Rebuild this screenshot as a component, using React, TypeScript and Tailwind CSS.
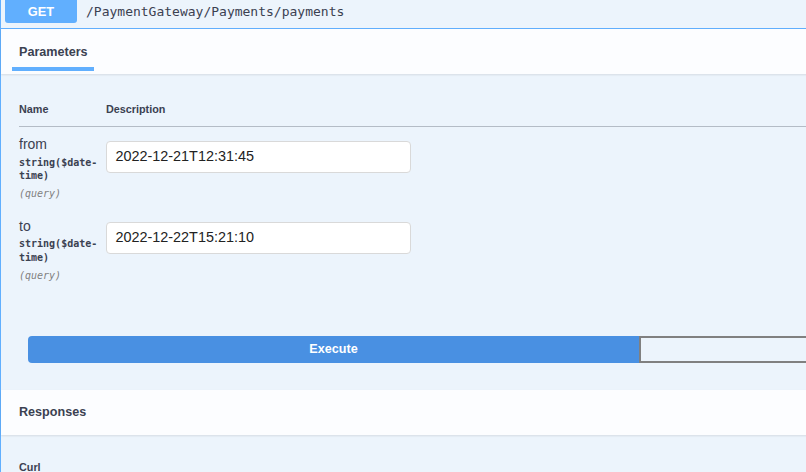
export default function App() {
  const rows = [
    { name: "from", value: "2022-12-21T12:31:45" },
    { name: "to", value: "2022-12-22T15:21:10" },
  ];
  return (
    <div
      className="w-[806px] h-[472px] overflow-hidden bg-white text-[#3b4151]"
      style={{ fontFamily: '"Liberation Sans", Arial, sans-serif' }}
    >
      <div className="w-[1300px] min-h-[472px] border-l border-[#61affe] bg-[#ecf4fc]">
        {/* summary */}
        <div className="h-[29px] border-b border-[#61affe] flex items-start pl-[4px]">
          <div className="w-[72px] h-[23px] bg-[#61affe] rounded-b-[3px] text-white font-bold text-[12.8px] flex items-center justify-center">
            GET
          </div>
          <div
            className="ml-[9px] h-[24px] flex items-center text-[13px] text-[#3b4151]"
            style={{ fontFamily: '"DejaVu Sans Mono", monospace' }}
          >
            /PaymentGateway/Payments/payments
          </div>
        </div>

        {/* parameters header */}
        <div className="h-[45px] bg-[#fcfdff] shadow-[0_1px_2px_rgba(0,0,0,0.1)] pl-[11px] relative">
          <div className="w-[82px] h-[42px] pt-[8px] pl-[7px] flex items-center border-b-4 border-[#61affe] text-[12.6px] font-bold">
            Parameters
          </div>
        </div>

        {/* table */}
        <div className="pl-[18px]">
          <div className="h-[53px] border-b border-[#b4bcc6] flex items-end pb-[10px] text-[10.8px] font-bold leading-[14px]">
            <div className="w-[87px]">Name</div>
            <div>Description</div>
          </div>
          {rows.map((r) => (
            <div key={r.name} className="h-[81.5px] flex">
              <div className="w-[87px] pt-[8.3px]">
                <div className="text-[14px] leading-[18px]">{r.name}</div>
                <div
                  className="mt-[2.5px] text-[10px] leading-[13.5px] font-bold w-[80px]"
                  style={{ fontFamily: '"DejaVu Sans Mono", monospace' }}
                >
                  string($date-
                  <br />
                  time)
                </div>
                <div
                  className="mt-[4.5px] text-[10px] leading-[13.5px] italic text-[#808080]"
                  style={{ fontFamily: '"DejaVu Sans Mono", monospace' }}
                >
                  (query)
                </div>
              </div>
              <div className="pt-[13.5px]">
                <div className="w-[305px] h-[32px] ml-[-0.5px] bg-white border border-[#d9d9d9] rounded-[4px] pl-[9px] flex items-center text-[14.4px] text-[#222]">
                  {r.value}
                </div>
              </div>
            </div>
          ))}
        </div>

        {/* execute */}
        <div className="mt-[46px] pl-[27px] flex">
          <div className="w-[611px] h-[27px] bg-[#4990e2] rounded-l-[4px] text-white font-bold text-[12.6px] flex items-center justify-center">
            Execute
          </div>
          <div className="w-[612px] h-[27px] border-2 border-[#808080] rounded-r-[4px]"></div>
        </div>

        {/* responses */}
        <div className="mt-[27px] h-[45px] bg-[#fcfdff] shadow-[0_1px_2px_rgba(0,0,0,0.1)] pl-[18px] flex items-center text-[12.6px] font-bold">
          <span className="mt-[-1px]">Responses</span>
        </div>

        <div className="pl-[18px] pt-[25px] text-[10.8px] font-bold leading-[14px]">Curl</div>
      </div>
    </div>
  );
}
